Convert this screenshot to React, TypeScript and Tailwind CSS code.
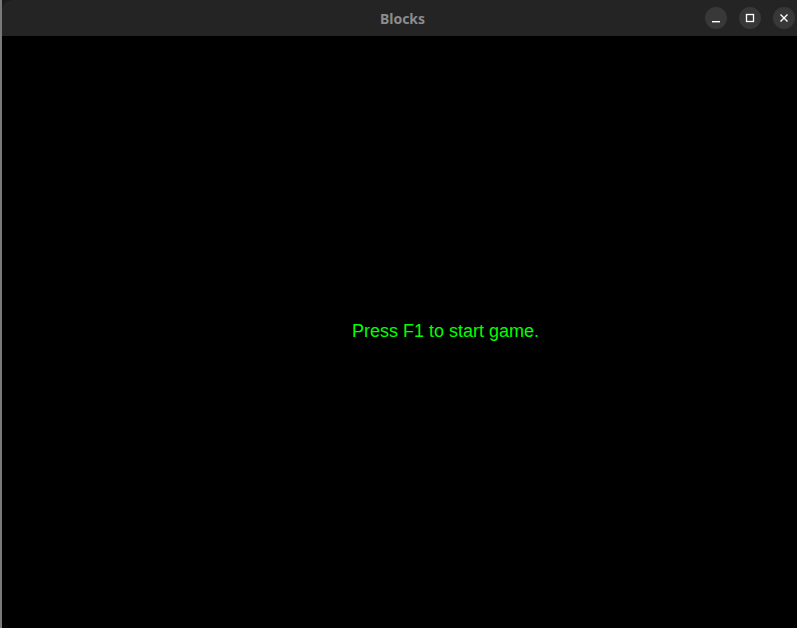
export default function App() {
  return (
    <div className="flex h-[628px] w-[797px] overflow-hidden bg-[#1b1b1b]">
      <div className="w-[2px] shrink-0 bg-[#7a7a7a]" />
      <div className="flex min-w-0 flex-1 flex-col overflow-hidden rounded-tl-[10px]">
        <div className="relative flex h-[36px] shrink-0 items-center justify-center bg-[#242424]">
          <span
            className="pl-[6px] text-[14px] font-bold text-[#8c8c8c]"
            style={{ fontFamily: '"Noto Sans", "Open Sans", sans-serif' }}
          >
            Blocks
          </span>
          <div className="absolute right-[2px] top-[7px] flex gap-[12px]">
            <div className="flex h-[22px] w-[22px] items-center justify-center rounded-full bg-[#383838]">
              <svg width="10" height="10" viewBox="0 0 10 10">
                <rect x="1" y="8" width="8" height="1.4" fill="#fff" />
              </svg>
            </div>
            <div className="flex h-[22px] w-[22px] items-center justify-center rounded-full bg-[#383838]">
              <svg width="10" height="10" viewBox="0 0 10 10">
                <rect x="1.5" y="1.5" width="7" height="7" fill="none" stroke="#fff" strokeWidth="1.3" />
              </svg>
            </div>
            <div className="flex h-[22px] w-[22px] items-center justify-center rounded-full bg-[#383838]">
              <svg width="10" height="10" viewBox="0 0 10 10">
                <path d="M1.5 1.5 L8.5 8.5 M8.5 1.5 L1.5 8.5" stroke="#fff" strokeWidth="1.4" />
              </svg>
            </div>
          </div>
        </div>
        <div className="flex-1 bg-black pl-[350px] pt-[286px]">
          <p
            className="text-[18px] leading-none text-[#00ff00]"
            style={{ fontFamily: '"Liberation Sans", Arial, sans-serif' }}
          >
            Press F1 to start game.
          </p>
        </div>
      </div>
    </div>
  )
}
